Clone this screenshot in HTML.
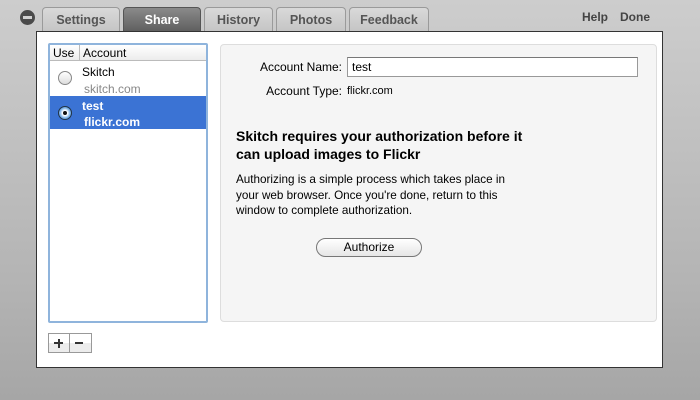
<!DOCTYPE html>
<html><head><style>
*{margin:0;padding:0;box-sizing:border-box}
body{width:700px;height:400px;overflow:hidden;background:linear-gradient(#cdcdcd,#b4b4b4 70%,#a6a6a6);font-family:"Liberation Sans",sans-serif;position:relative;font-size:12px;color:#000}
.a{position:absolute}
.tab{position:absolute;top:7px;height:25px;border:1px solid #9a9a9a;border-bottom:none;border-radius:4px 4px 0 0;background:linear-gradient(#d9d9d9,#c4c4c4);color:#555;font-weight:bold;font-size:12.5px;text-align:center;line-height:24px}
.tab.on{background:linear-gradient(#8a8a8a,#5e5e5e);color:#fff;border-color:#555}
</style></head><body>
<div class="a" style="left:20px;top:10px;width:15px;height:15px;border-radius:50%;background:#4a4a4a"><div class="a" style="left:3px;top:6px;width:9px;height:3px;background:#d0d0d0"></div></div>
<div class="tab" style="left:42px;width:78px">Settings</div>
<div class="tab on" style="left:123px;width:78px">Share</div>
<div class="tab" style="left:204px;width:69px">History</div>
<div class="tab" style="left:276px;width:70px">Photos</div>
<div class="tab" style="left:349px;width:80px">Feedback</div>
<div class="a" style="left:582px;top:10px;font-weight:bold;color:#444;font-size:12px">Help</div>
<div class="a" style="left:620px;top:10px;font-weight:bold;color:#444;font-size:12px">Done</div>
<div class="a" style="left:36px;top:31px;width:627px;height:337px;background:#fff;border:1px solid #333"></div>
<div class="a" style="left:48px;top:43px;width:160px;height:280px;border:2px solid #8fb4dc;border-radius:2px;background:#fff;overflow:hidden">
 <div class="a" style="left:0;top:0;width:156px;height:16px;border-bottom:1px solid #bbb;background:linear-gradient(#fff,#ececec)"></div>
 <div class="a" style="left:29px;top:0;width:1px;height:16px;background:#bbb"></div>
 <div class="a" style="left:3px;top:1px">Use</div>
 <div class="a" style="left:33px;top:1px">Account</div>
 <div class="a" style="left:8px;top:26px;width:14px;height:14px;border-radius:50%;border:1px solid #888;background:linear-gradient(#fff,#ddd)"></div>
 <div class="a" style="left:32px;top:20px">Skitch</div>
 <div class="a" style="left:34px;top:37px;color:#888">skitch.com</div>
 <div class="a" style="left:0;top:51px;width:156px;height:33px;background:#3b73d4"></div>
 <div class="a" style="left:8px;top:61px;width:14px;height:14px;border-radius:50%;border:1px solid #234;background:radial-gradient(#fff 30%,#7bb2e8 60%,#3a75c0)"><div class="a" style="left:4px;top:4px;width:4px;height:4px;border-radius:50%;background:#111"></div></div>
 <div class="a" style="left:32px;top:54px;color:#fff;font-weight:bold">test</div>
 <div class="a" style="left:34px;top:70px;color:#fff;font-weight:bold">flickr.com</div>
</div>
<div class="a" style="left:220px;top:44px;width:437px;height:278px;background:#f5f5f5;border:1px solid #ddd;border-radius:4px"></div>
<div class="a" style="left:240px;top:60px;width:102px;text-align:right">Account Name:</div>
<div class="a" style="left:347px;top:57px;width:291px;height:20px;background:#fff;border:1px solid #999;border-top-color:#777;padding:2px 4px">test</div>
<div class="a" style="left:240px;top:84px;width:102px;text-align:right">Account Type:</div>
<div class="a" style="left:347px;top:85px;font-size:11px">flickr.com</div>
<div class="a" style="left:236px;top:127px;font-size:14px;font-weight:bold;line-height:18px">Skitch requires your authorization before it<br>can upload images to Flickr</div>
<div class="a" style="left:236px;top:172px;font-size:11.7px;line-height:15.5px">Authorizing is a simple process which takes place in<br>your web browser. Once you're done, return to this<br>window to complete authorization.</div>
<div class="a" style="left:316px;top:238px;width:106px;height:19px;border:1px solid #777;border-radius:10px;background:linear-gradient(#fff,#e6e6e6);text-align:center;line-height:17px">Authorize</div>
<div class="a" style="left:48px;top:333px;width:44px;height:20px;border:1px solid #999;background:linear-gradient(#fff 50%,#ececec 50%)"></div>
<div class="a" style="left:69px;top:333px;width:1px;height:20px;background:#999"></div>
<div class="a" style="left:54px;top:342px;width:9px;height:2px;background:#333"></div>
<div class="a" style="left:57.5px;top:338.5px;width:2px;height:9px;background:#333"></div>
<div class="a" style="left:75px;top:342px;width:8px;height:2px;background:#333"></div>
</body></html>
